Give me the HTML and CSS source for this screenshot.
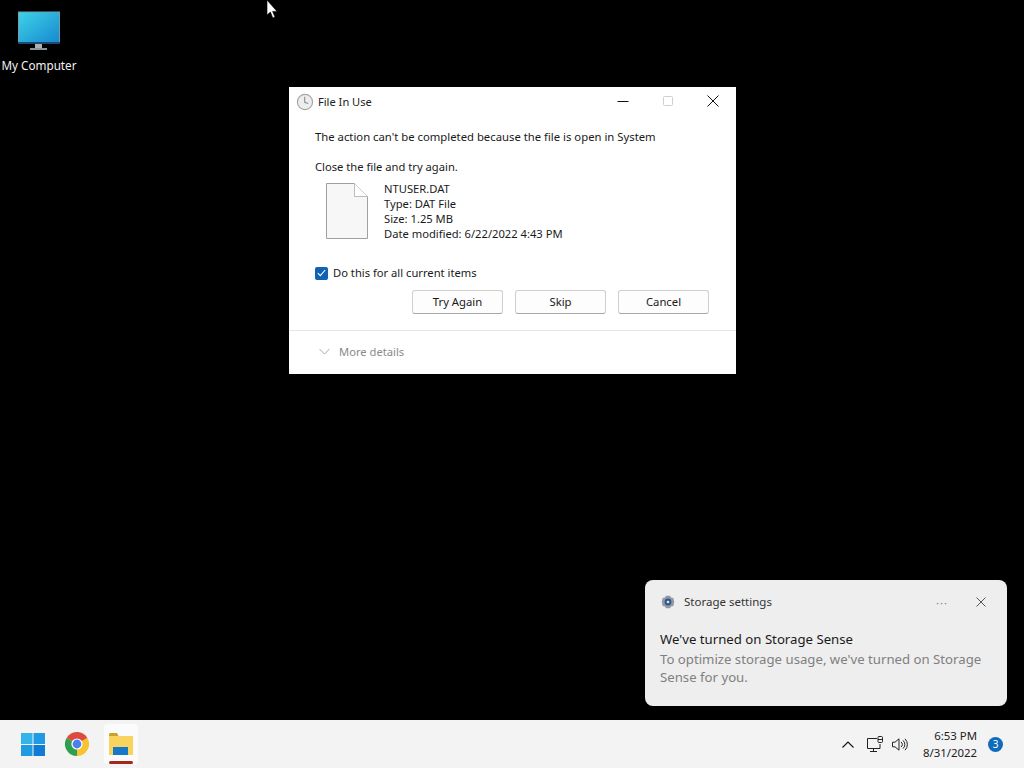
FILE: index.html
```html
<!DOCTYPE html>
<html lang="en">
<head>
<meta charset="utf-8">
<title>File In Use</title>
<link rel="stylesheet" href="styles.css">
</head>
<body>
<main class="desktop">
  <div class="desk-icon">
    <svg class="monitor" width="44" height="40" viewBox="0 0 44 40">
      <defs><linearGradient id="scr" x1="0" y1="0" x2="1" y2="1"><stop offset="0" stop-color="#3fd3e8"/><stop offset="1" stop-color="#1688cf"/></linearGradient></defs>
      <rect x="2.5" y="1" width="41" height="31" fill="url(#scr)" stroke="#6f9fb0" stroke-width="1"/>
      <rect x="2" y="31" width="42" height="2" fill="#1c4a70"/>
      <rect x="19" y="33" width="7" height="4" fill="#a9b2b6"/>
      <rect x="14" y="37" width="17" height="2" fill="#8d9497"/>
    </svg>
    <span class="desk-label">My Computer</span>
  </div>

  <svg class="cursor" width="12" height="19" viewBox="0 0 12 19"><path d="M1 0V15L4.4 12L6.8 18L9 17L6.6 11.4H11Z" fill="#fff" stroke="#000" stroke-width=".6"/></svg>

  <section class="dialog">
    <header class="titlebar">
      <svg width="18" height="18" viewBox="0 0 18 18"><circle cx="9" cy="9" r="7.6" fill="#eceded" stroke="#a5a8aa" stroke-width="1.2"/><path d="M8.7 3.8V9.3L12.2 10.4" fill="none" stroke="#8b8e90" stroke-width="1.1"/></svg>
      <span class="title">File In Use</span>
      <div class="winbtns">
        <svg width="12" height="12" viewBox="0 0 12 12"><path d="M.5 6.5H11.5" stroke="#111" stroke-width="1"/></svg>
        <svg width="12" height="12" viewBox="0 0 12 12"><rect x="1.5" y="1.5" width="9" height="9" rx="1" fill="none" stroke="#cfcfcf"/></svg>
        <svg width="12" height="12" viewBox="0 0 12 12"><path d="M.5.5L11.5 11.5M11.5.5L.5 11.5" stroke="#111" stroke-width="1"/></svg>
      </div>
    </header>
    <div class="content">
      <p class="msg">The action can't be completed because the file is open in System</p>
      <p class="msg second">Close the file and try again.</p>
      <div class="file">
        <svg width="44" height="58" viewBox="0 0 44 58"><path d="M1.5 1.5H29.5L42.5 14.5V56.5H1.5Z" fill="#f7f7f7" stroke="#a0a0a0"/><path d="M29.5 1.5V14.5H42.5" fill="#fff" stroke="#bdbdbd"/></svg>
        <ul class="meta">
          <li>NTUSER.DAT</li>
          <li>Type: DAT File</li>
          <li>Size: 1.25 MB</li>
          <li>Date modified: 6/22/2022 4:43 PM</li>
        </ul>
      </div>
      <label class="check">
        <span class="box"><svg width="9" height="8" viewBox="0 0 9 8"><path d="M.8 4.2L3.3 6.6L8.2 1" fill="none" stroke="#fff" stroke-width="1.1"/></svg></span>
        Do this for all current items
      </label>
      <div class="actions">
        <button class="btn">Try Again</button>
        <button class="btn">Skip</button>
        <button class="btn">Cancel</button>
      </div>
    </div>
    <footer class="details">
      <svg width="11" height="7" viewBox="0 0 11 7"><path d="M.5 1L5.5 6L10.5 1" fill="none" stroke="#a8a8a8"/></svg>
      <span>More details</span>
    </footer>
  </section>

  <aside class="toast">
    <div class="toast-head">
      <svg width="14" height="14" viewBox="0 0 14 14"><path d="M5 .8H9L10 2.6L12.4 3L13.2 7L12.4 11L10 11.4L9 13.2H5L4 11.4L1.6 11L.8 7L1.6 3L4 2.6Z" fill="#8f9aa6"/><circle cx="7" cy="7" r="3.4" fill="#33598c"/><circle cx="7" cy="7" r="1.3" fill="#dfe6ee"/></svg>
      <span class="app">Storage settings</span>
      <span class="dots">···</span>
      <svg width="10" height="10" viewBox="0 0 10 10"><path d="M.5.5L9.5 9.5M9.5.5L.5 9.5" stroke="#555" stroke-width="1"/></svg>
    </div>
    <h2 class="toast-title">We've turned on Storage Sense</h2>
    <p class="toast-body">To optimize storage usage, we've turned on Storage Sense for you.</p>
  </aside>
</main>

<nav class="taskbar">
  <div class="apps">
    <div class="app-slot">
      <svg width="24" height="23" viewBox="0 0 24 23"><rect width="11.5" height="11" fill="#36b4ea"/><rect x="12.5" width="11.5" height="11" fill="#1f9be3"/><rect y="12" width="11.5" height="11" fill="#1f9be3"/><rect x="12.5" y="12" width="11.5" height="11" fill="#0f7bd4"/></svg>
    </div>
    <div class="app-slot">
      <svg width="24" height="24" viewBox="0 0 24 24"><path d="M12 12L22.4 6A12 12 0 0 0 1.6 6Z" fill="#dd4b3e"/><path d="M12 12L1.6 6A12 12 0 0 0 12 24Z" fill="#2f9e4f"/><path d="M12 12L12 24A12 12 0 0 0 22.4 6Z" fill="#f6c433"/><circle cx="12" cy="12" r="5.6" fill="#fff"/><circle cx="12" cy="12" r="4.4" fill="#4a80ec"/></svg>
    </div>
    <div class="app-slot active">
      <svg width="24" height="22" viewBox="0 0 24 22"><path d="M0 1.5Q0 0 1.5 0H8L9.5 3H0Z" fill="#c9a227"/><rect y="3" width="24" height="19" fill="#f8d35e"/><rect x="4" y="14" width="15" height="8" fill="#1678c8"/></svg>
      <span class="underline"></span>
    </div>
  </div>
  <div class="tray">
    <svg width="12" height="7" viewBox="0 0 12 7"><path d="M.5 6.5L6 1L11.5 6.5" fill="none" stroke="#111" stroke-width="1.1"/></svg>
    <svg class="net" width="17" height="17" viewBox="0 0 17 17"><path d="M10 2.5H.5V12.5H13V8M6.5 12.5V15.5M3 15.5H10" fill="none" stroke="#222"/><rect x="11" y=".5" width="4.5" height="6" rx="1" fill="#f3f3f3" stroke="#222"/><path d="M11 3.5H15.5" stroke="#222"/></svg>
    <svg class="vol" width="16" height="15" viewBox="0 0 16 15"><path d="M.5 5.2H3L7 1.8V13.2L3 9.8H.5Z" fill="none" stroke="#222"/><path d="M9 5A3 3 0 0 1 9 10M11 3.4A5.5 5.5 0 0 1 11 11.6M13 1.8A8 8 0 0 1 13 13.2" fill="none" stroke="#222"/></svg>
    <div class="clock"><span>6:53 PM</span><span>8/31/2022</span></div>
    <span class="badge">3</span>
  </div>
</nav>
</body>
</html>
```
FILE: styles.css
```css
* { box-sizing: border-box; }
html, body { margin: 0; height: 100%; }
body {
  width: 1024px; height: 768px; overflow: hidden;
  background: #000; color: #1a1a1a;
  font-family: "Noto Sans", "Open Sans", sans-serif; font-size: 11.3px;
  display: flex; flex-direction: column;
}
p, ul, h2 { margin: 0; padding: 0; font-weight: 400; }
ul { list-style: none; }

.desktop { position: relative; flex: 1; }
.desk-icon { position: absolute; left: -1px; top: 11px; width: 78px; display: flex; flex-direction: column; align-items: center; color: #f2f2f2; }
.desk-label { margin-top: 6px; margin-left: 2px; line-height: 16px; font-size: 11.7px; }
.cursor { position: absolute; left: 266px; top: 0; }

.dialog { position: absolute; left: 289px; top: 87px; width: 447px; height: 287px; background: #fff; display: flex; flex-direction: column; }
.titlebar { height: 29px; padding: 0 17px 0 7px; display: flex; align-items: center; gap: 4px; }
.title { flex: 1; line-height: 18px; color: #222; font-size: 11.1px; }
.winbtns { display: flex; gap: 33px; margin-top: -2px; }
.content { flex: 1; padding: 0 27px 0 26px; }
.msg { line-height: 17px; margin-top: 12px; }
.second { margin-top: 13px; font-size: 11.2px; }
.file { display: flex; margin: 0 0 0 10px; gap: 15px; height: 69px; align-items: flex-start; }
.file svg { margin-top: 7px; }
.meta { line-height: 15px; margin-top: 6px; font-size: 11.2px; }
.check { display: flex; align-items: center; gap: 5px; line-height: 16px; margin-top: 21px; font-size: 11.2px; }
.box { width: 13px; height: 13px; border-radius: 2px; background: #0f62b4; display: flex; align-items: center; justify-content: center; }
.actions { display: flex; justify-content: flex-end; gap: 12px; margin-top: 9px; }
.btn { width: 91px; height: 24px; padding: 0 0 2px; font: inherit; color: #1a1a1a; background: #fdfdfd; border: 1px solid #cfcfcf; border-bottom-color: #a8a8a8; border-radius: 3px; }
.details { height: 44px; border-top: 1px solid #e6e6e6; padding: 0 0 2px 30px; display: flex; align-items: center; gap: 9px; color: #8a8a8a; font-size: 11.2px; }

.toast { position: absolute; left: 645px; top: 580px; width: 362px; height: 126px; background: #eeeeef; border-radius: 8px; padding: 0 15px; }
.toast-head { height: 44px; display: flex; align-items: center; padding: 0 6px 0 1px; }
.app { flex: 1; margin-left: 9px; margin-bottom: 2px; color: #333; font-size: 11.5px; }
.dots { margin-right: 28px; color: #888; letter-spacing: 1px; }
.toast-title { font-size: 13.2px; line-height: 18px; margin-top: 6px; color: #1a1a1a; }
.toast-body { font-size: 13.2px; line-height: 18px; margin-top: 2px; color: #808080; }

.taskbar { height: 48px; background: #f3f3f3; display: flex; justify-content: space-between; align-items: center; padding: 0 21px 0 12px; flex: none; }
.apps { display: flex; gap: 2px; }
.app-slot { position: relative; width: 42px; height: 40px; display: flex; align-items: center; justify-content: center; }
.app-slot.active { width: 34px; margin: 0 4px; background: #fbfbfb; border-radius: 4px; }
.underline { position: absolute; left: 5px; bottom: 0; width: 24px; height: 3px; border-radius: 2px; background: #a5261d; }
.tray { display: flex; align-items: center; }
.net { margin-left: 13px; }
.vol { margin-left: 8px; }
.clock { display: flex; flex-direction: column; align-items: flex-end; margin-left: 15px; line-height: 17px; color: #222; font-size: 11.4px; }
.badge { margin-left: 11px; width: 15px; height: 15px; border-radius: 50%; background: #0f6cbd; color: #fff; font-size: 10px; line-height: 15px; text-align: center; }
```
